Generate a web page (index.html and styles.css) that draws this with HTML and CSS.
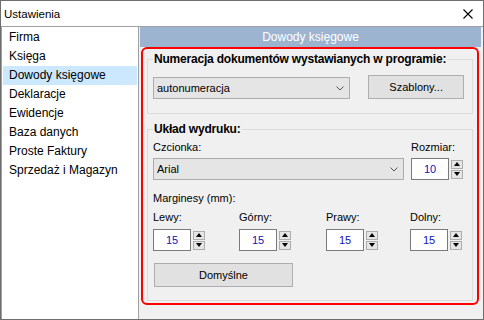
FILE: index.html
```html
<!DOCTYPE html>
<html lang="pl">
<head>
<meta charset="utf-8">
<title>Ustawienia</title>
<link rel="stylesheet" href="styles.css">
</head>
<body>
<div class="window">
  <div class="titlebar">
    <span class="title">Ustawienia</span>
    <svg class="close" width="10" height="10" viewBox="0 0 10 10"><path d="M0.5 0.5 L9.5 9.5 M9.5 0.5 L0.5 9.5" stroke="#000" stroke-width="1.1" fill="none"/></svg>
  </div>
  <div class="main">
    <ul class="nav">
      <li>Firma</li>
      <li>Księga</li>
      <li class="selected">Dowody księgowe</li>
      <li>Deklaracje</li>
      <li>Ewidencje</li>
      <li>Baza danych</li>
      <li>Proste Faktury</li>
      <li>Sprzedaż i Magazyn</li>
    </ul>
    <div class="content">
      <div class="header">Dowody księgowe</div>
      <div class="panel">
        <fieldset class="group g1">
          <legend>Numeracja dokumentów wystawianych w programie:</legend>
          <div class="row1">
            <div class="combo combo-num"><span>autonumeracja</span><svg width="8" height="5" viewBox="0 0 8 5"><polyline points="0.5,0.5 4,4 7.5,0.5" stroke="#555" fill="none"/></svg></div>
            <button class="btn btn-szablony">Szablony...</button>
          </div>
        </fieldset>
        <fieldset class="group g2">
          <legend>Układ wydruku:</legend>
          <div class="fontrow">
            <div class="fontcol">
              <div class="lbl">Czcionka:</div>
              <div class="combo combo-font"><span>Arial</span><svg width="8" height="5" viewBox="0 0 8 5"><polyline points="0.5,0.5 4,4 7.5,0.5" stroke="#555" fill="none"/></svg></div>
            </div>
            <div class="sizecol">
              <div class="lbl">Rozmiar:</div>
              <div class="spin"><div class="box">10</div><div class="arrows"><span class="arr"><i class="up"></i></span><span class="arr"><i class="down"></i></span></div></div>
            </div>
          </div>
          <div class="lbl marg">Marginesy (mm):</div>
          <div class="margins">
            <div class="mcol"><div class="lbl">Lewy:</div><div class="spin"><div class="box">15</div><div class="arrows"><span class="arr"><i class="up"></i></span><span class="arr"><i class="down"></i></span></div></div></div>
            <div class="mcol"><div class="lbl">Górny:</div><div class="spin"><div class="box">15</div><div class="arrows"><span class="arr"><i class="up"></i></span><span class="arr"><i class="down"></i></span></div></div></div>
            <div class="mcol"><div class="lbl">Prawy:</div><div class="spin"><div class="box">15</div><div class="arrows"><span class="arr"><i class="up"></i></span><span class="arr"><i class="down"></i></span></div></div></div>
            <div class="mcol"><div class="lbl">Dolny:</div><div class="spin"><div class="box">15</div><div class="arrows"><span class="arr"><i class="up"></i></span><span class="arr"><i class="down"></i></span></div></div></div>
          </div>
          <button class="btn btn-default">Domyślne</button>
        </fieldset>
      </div>
    </div>
  </div>
</div>
</body>
</html>
```

FILE: styles.css
```css
* { box-sizing: border-box; }
body {
  margin: 0;
  font-family: "Liberation Sans", Arial, sans-serif;
  font-size: 12px;
  line-height: 14px;
  color: #000;
  background: #fff;
}
.window {
  width: 484px;
  height: 320px;
  border: 1px solid #6e6e6e;
  display: flex;
  flex-direction: column;
  background: #f0f0f0;
  overflow: hidden;
}
.titlebar {
  height: 25px;
  flex: none;
  background: #fff;
  display: flex;
  align-items: center;
  justify-content: space-between;
  padding: 0 10px 0 3px;
}
.title { font-size: 11.5px; }
.close { display: block; }
.main {
  flex: 1;
  display: flex;
  min-height: 0;
  border-top: 1px solid #a0a0a0;
}
.nav {
  width: 138px;
  flex: none;
  margin: 0;
  padding: 1px 1px 0 1px;
  list-style: none;
  background: #fff;
  border-left: 1px solid #a0a0a0;
  border-right: 1px solid #a0a0a0;
}
.nav li {
  height: 19px;
  line-height: 19px;
  padding-left: 6px;
  white-space: nowrap;
}
.nav li.selected { background: #cce8ff; }
.content {
  flex: 1;
  display: flex;
  flex-direction: column;
  padding: 0 2px 0 1px;
  min-width: 0;
}
.header {
  height: 20px;
  line-height: 20px;
  background: #9db4d0;
  color: #fff;
  text-align: center;
}
.panel {
  border: 2px solid #ff0000;
  border-radius: 6px;
  margin: 0 2px 0 1px;
  padding: 3px 4px 2px 4px;
  font-size: 11px;
}
.group {
  margin: 0;
  min-width: 0;
  border: 1px solid #dcdcdc;
  padding: 9px 8px 14px 5px;
}
.group legend {
  padding: 0 1px;
  font-weight: bold;
  font-size: 12px;
  letter-spacing: -0.2px;
  line-height: 14px;
}
.g2 {
  margin-top: 8px;
  padding: 4px 8px 13px 5px;
}
.row1 {
  display: flex;
  align-items: flex-end;
  gap: 18px;
}
.combo {
  height: 22px;
  display: flex;
  align-items: center;
  justify-content: space-between;
  padding: 0 5px 0 3px;
  background: #e5e5e5;
  border: 1px solid #acacac;
}
.combo svg { display: block; }
.combo-num { width: 198px; }
.combo-font { width: 251px; margin-top: 4px; }
.btn {
  font: inherit;
  color: #000;
  background: #e1e1e1;
  border: 1px solid #adadad;
  padding: 0;
  height: 24px;
}
.btn-szablony { width: 96px; }
.btn-default {
  display: block;
  width: 139px;
  margin: 12px 0 0 1px;
}
.fontrow {
  display: flex;
  gap: 7px;
}
.sizecol .spin { margin-top: 4px; }
.marg { margin-top: 11px; }
.margins {
  display: grid;
  grid-template-columns: 86px 87px 84px auto;
  margin-top: 5px;
}
.mcol .spin { margin-top: 5px; }
.spin {
  display: flex;
  align-items: center;
  gap: 2px;
}
.spin .box {
  width: 38px;
  height: 22px;
  line-height: 20px;
  background: #fff;
  border: 1px solid #7a7a7a;
  text-align: center;
  color: #1010c0;
}
.arrows {
  display: flex;
  flex-direction: column;
  gap: 1px;
}
.arr {
  width: 12px;
  height: 9px;
  border: 1px solid #adadad;
  background: #e6e6e6;
  display: flex;
  align-items: center;
  justify-content: center;
}
.arr i {
  display: block;
  width: 0;
  height: 0;
  border-left: 3px solid transparent;
  border-right: 3px solid transparent;
}
.arr i.up { border-bottom: 4px solid #000; }
.arr i.down { border-top: 4px solid #000; }
```
